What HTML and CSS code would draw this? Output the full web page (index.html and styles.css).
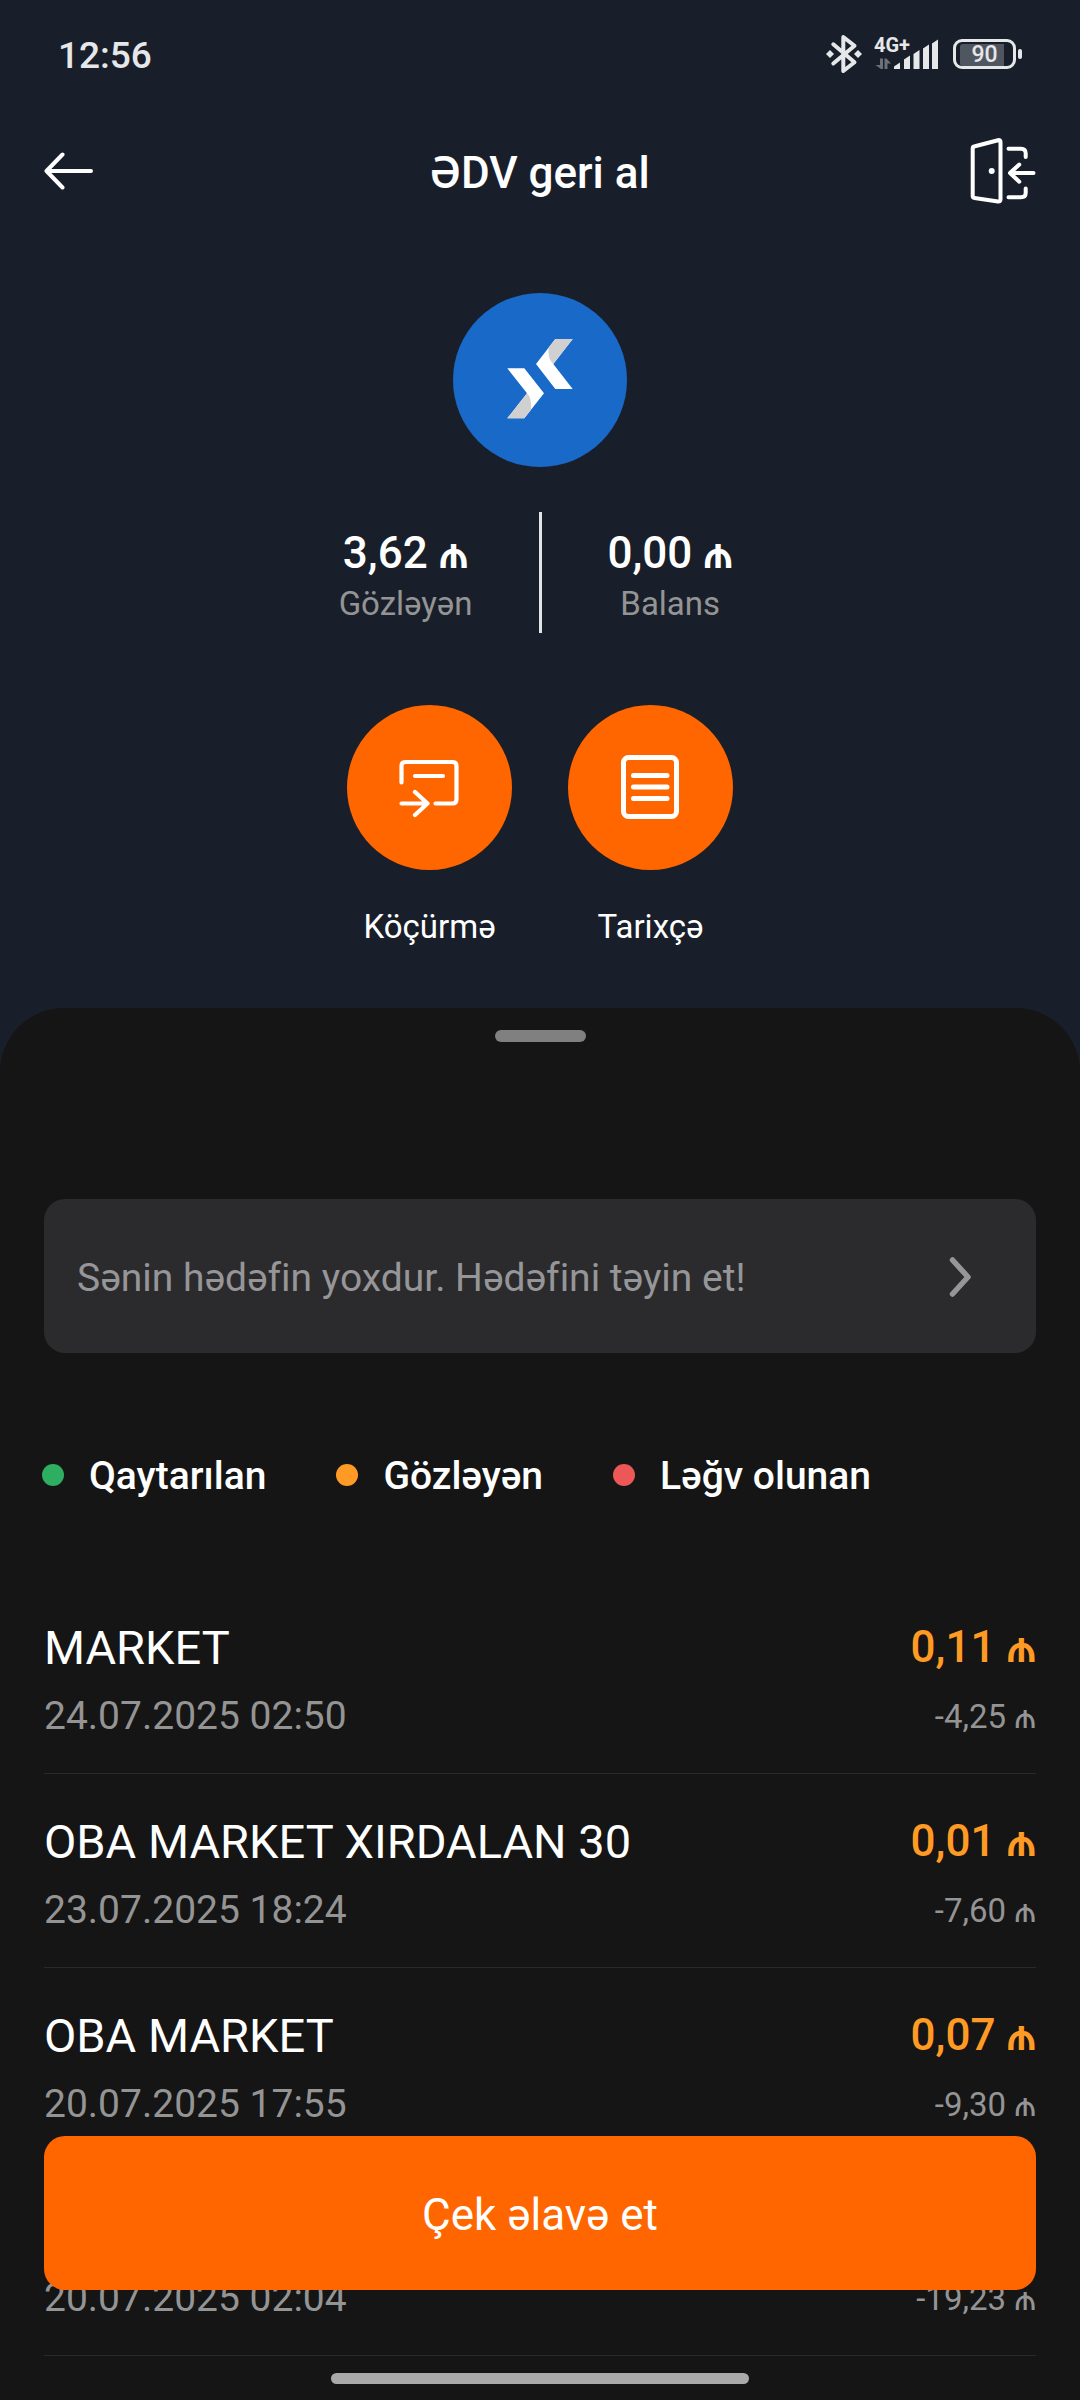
FILE: index.html
```html
<!DOCTYPE html>
<html lang="az">
<head>
<meta charset="utf-8">
<meta name="viewport" content="width=device-width, initial-scale=1">
<title>ƏDV geri al</title>
<link rel="stylesheet" href="styles.css">
</head>
<body>
<div class="status-bar">
  <span class="clock">12:56</span>
  <div class="status-icons">
    <svg class="bluetooth" width="38" height="42" viewBox="0 0 38 42" aria-hidden="true">
      <path d="M8.3 11.3 29.5 29.2 18.3 38V4l11.2 8.8L8.3 30.5" fill="none" stroke="currentColor" stroke-width="4" stroke-linejoin="round" stroke-linecap="round"/>
      <path d="M1 21l4-4 4 4-4 4zM29 21l4-4 4 4-4 4z" fill="currentColor"/>
    </svg>
    <svg class="signal" width="66" height="50" viewBox="0 -8 66 50" aria-hidden="true">
      <text class="network" x="0" y="15">4G+</text>
      <path d="M1.500 28H6V21.500h3V32H7zM10.500 32V21.500h2l4.500 5h-3.500V32z" fill="#6c7078"/>
      <path d="M20 32v-2.500l6-4V32zM30 32V22.500l6-4V32zM39.500 32V17l6-4v19zM49 32V11.500l6-4V32zM58 32V6.500l6-4V32z" fill="currentColor"/>
    </svg>
    <div class="battery"><span class="battery-level">90</span></div>
  </div>
</div>

<header class="top-bar">
  <button class="icon-button" type="button" aria-label="Geri">
    <svg width="50" height="40" viewBox="0 0 50 40"><path d="M47 20H3M18.500 3.500 2.500 20l16 16.500" fill="none" stroke="#fff" stroke-width="4" stroke-linecap="round" stroke-linejoin="round"/></svg>
  </button>
  <h1 class="title">ƏDV geri al</h1>
  <button class="icon-button" type="button" aria-label="Çıxış">
    <svg width="68" height="68" viewBox="0 0 68 68">
      <g fill="none" stroke="#fff" stroke-width="4" stroke-linecap="round" stroke-linejoin="round">
        <path d="M6 9.500 30 3.200q2.500-.6 2.500 1.800v57.500q0 2.300-2.500 2L6.500 61Q4.700 60.700 4.700 59V11.500Q4.700 9.800 6 9.500z"/>
        <path d="M40.500 11.700H53q4.700 0 4.700 4.500V20M57.700 51.500v4.300q0 4.500-4.700 4.500H40.500"/>
        <path d="M65.500 36h-23M51.300 27.500 42 36l9.300 8.700"/>
      </g>
      <circle cx="23.700" cy="34" r="3" fill="#fff"/>
    </svg>
  </button>
</header>

<section class="hero">
  <svg class="logo" width="174" height="174" viewBox="0 0 174 174" aria-hidden="true">
    <circle cx="87" cy="87" r="87" fill="#1969c9"/>
    <path d="M102.300 46h17.400l-19.400 25 19.400 25h-17.400L83 71zM54.300 75.300h17L91 100.300l-19.700 25h-17l19.700-25z" fill="#fff"/>
    <path d="M102.300 46h17.400l-19.400 25Q94 65 96 54zM54.300 125.300h17l6.700-8.500Q79 105 74 100.300z" fill="#d0d0d0"/>
  </svg>
  <dl class="balances">
    <div class="balance pending">
      <dd class="balance-value">3,62 ₼</dd>
      <dt class="balance-label">Gözləyən</dt>
    </div>
    <div class="balance-divider"></div>
    <div class="balance">
      <dd class="balance-value">0,00 ₼</dd>
      <dt class="balance-label">Balans</dt>
    </div>
  </dl>
  <nav class="actions">
    <button class="action" type="button">
      <svg class="action-icon" width="165" height="165" viewBox="0 0 165 165" aria-hidden="true">
        <g fill="none" stroke="#fff" stroke-width="4.200" stroke-linecap="round" stroke-linejoin="round">
          <path d="M54.500 77.500V61q0-4 4-4h47q4 0 4 4v33.500q0 4-4 4H88.500M68 71h28M54.500 98.500h25M68 87l12.500 11.500L68 110"/>
        </g>
      </svg>
      <span>Köçürmə</span>
    </button>
    <button class="action" type="button">
      <svg class="action-icon" width="165" height="165" viewBox="0 0 165 165" aria-hidden="true">
        <g fill="none" stroke="#fff" stroke-width="5" stroke-linecap="round">
          <rect x="55.500" y="52.500" width="53" height="59" rx="5"/>
          <path d="M65.500 70.500h33.500M65.500 82h33.500M65.500 93.500h33.500"/>
        </g>
      </svg>
      <span>Tarixçə</span>
    </button>
  </nav>
</section>

<main class="sheet">
  <div class="handle"></div>
  <a class="goal" href="#goal">
    <span>Sənin hədəfin yoxdur. Hədəfini təyin et!</span>
    <svg width="26" height="42" viewBox="0 0 26 42" aria-hidden="true"><path d="M4.500 3 20 20 4.500 37" fill="none" stroke="currentColor" stroke-width="5.500" stroke-linecap="round" stroke-linejoin="round"/></svg>
  </a>
  <ul class="legend">
    <li class="legend-item returned">Qaytarılan</li>
    <li class="legend-item waiting">Gözləyən</li>
    <li class="legend-item cancelled">Ləğv olunan</li>
  </ul>
  <ul class="receipts">
    <li class="receipt">
      <span class="store">MARKET</span><span class="refund">0,11 ₼</span>
      <time class="date">24.07.2025 02:50</time><span class="spent">-4,25 ₼</span>
    </li>
    <li class="receipt">
      <span class="store">OBA MARKET XIRDALAN 30</span><span class="refund">0,01 ₼</span>
      <time class="date">23.07.2025 18:24</time><span class="spent">-7,60 ₼</span>
    </li>
    <li class="receipt">
      <span class="store">OBA MARKET</span><span class="refund">0,07 ₼</span>
      <time class="date">20.07.2025 17:55</time><span class="spent">-9,30 ₼</span>
    </li>
    <li class="receipt">
      <time class="date">20.07.2025 02:04</time><span class="spent">-19,23 ₼</span>
    </li>
  </ul>
</main>

<footer class="bottom-bar">
  <button class="add-receipt" type="button">Çek əlavə et</button>
  <div class="home-indicator"></div>
</footer>
</body>
</html>
```

FILE: styles.css
```css
* {
  box-sizing: border-box;
}

body {
  margin: 0;
  min-height: 100vh;
  display: flex;
  flex-direction: column;
  background: #191f2a;
  color: #fff;
  font-family: Roboto, "Noto Sans", sans-serif;
}

button {
  padding: 0;
  border: 0;
  background: none;
  color: inherit;
  font: inherit;
}

ul,
dl,
dd {
  margin: 0;
  padding: 0;
  list-style: none;
}

svg {
  display: block;
}

/* Status bar */
.status-bar {
  display: flex;
  align-items: center;
  justify-content: space-between;
  height: 108px;
  padding: 0 58px;
  color: #e6e7e9;
}

.clock {
  padding-top: 2px;
  font-size: 37px;
  font-weight: 500;
}

.status-icons {
  display: flex;
  align-items: center;
  gap: 11px;
}

.network {
  fill: currentColor;
  font-size: 20px;
  font-weight: 700;
}

.battery {
  position: relative;
  width: 63px;
  height: 30px;
  margin: 0 6px 0 2px;
  padding: 2px 4px;
  border: 3px solid currentColor;
  border-radius: 9px;
}

.battery::after {
  content: "";
  position: absolute;
  top: 7px;
  right: -9px;
  width: 4px;
  height: 10px;
  border-radius: 2px;
  background: currentColor;
}

.battery-level {
  display: block;
  border-radius: 3px;
  background: linear-gradient(90deg, #50565f 90%, transparent 90%);
  font-size: 23px;
  font-weight: 500;
  line-height: 22px;
  text-align: center;
}

/* Header */
.top-bar {
  display: grid;
  grid-template-columns: 1fr auto 1fr;
  align-items: center;
  height: 126px;
  padding: 0 44px;
}

.icon-button:first-child {
  justify-self: start;
}

.icon-button:last-child {
  justify-self: end;
}

.title {
  margin: 0;
  padding-top: 3px;
  font-size: 44px;
  font-weight: 500;
}

/* Balances and actions */
.hero {
  display: flex;
  flex-direction: column;
  align-items: center;
  padding: 59px 44px 59px;
}

.balances {
  display: grid;
  grid-template-columns: 1fr 3px 1fr;
  align-items: center;
  gap: 66px;
  width: 100%;
  margin: 45px 0 72px;
}

.balance {
  justify-self: start;
  display: flex;
  flex-direction: column;
  align-items: center;
}

.pending {
  justify-self: end;
}

.balance-divider {
  height: 121px;
  background: #e3e4e6;
}

.balance-value {
  font-size: 44px;
  font-weight: 500;
  line-height: 62px;
}

.balance-label {
  color: #949494;
  font-size: 33px;
  line-height: 40px;
}

.actions {
  display: flex;
  gap: 56px;
}

.action {
  display: flex;
  flex-direction: column;
  align-items: center;
  gap: 35px;
  font-size: 33px;
  line-height: 44px;
}

.action-icon {
  border-radius: 50%;
  background: #ff6600;
}

/* Bottom sheet */
.sheet {
  flex: 1;
  padding: 22px 44px 0;
  border-radius: 64px 64px 0 0;
  background: #151515;
}

.handle {
  width: 91px;
  height: 12px;
  margin: 0 auto 157px;
  border-radius: 6px;
  background: #808080;
}

.goal {
  display: flex;
  align-items: center;
  justify-content: space-between;
  height: 154px;
  padding: 3px 62px 0 33px;
  border-radius: 21px;
  background: #2b2b2d;
  color: #969698;
  font-size: 39px;
  text-decoration: none;
}

.legend {
  display: flex;
  gap: 70px;
  margin: 99px 0 80px -2px;
}

.legend-item {
  display: flex;
  align-items: center;
  gap: 25px;
  font-size: 39px;
  font-weight: 500;
  line-height: 48px;
}

.legend-item::before {
  content: "";
  width: 22px;
  height: 22px;
  margin-bottom: 2px;
  border-radius: 50%;
  background: currentColor;
}

.returned::before {
  background: #2dae60;
}

.waiting::before {
  background: #ff9a24;
}

.cancelled::before {
  background: #ec5757;
}

.receipt {
  display: grid;
  grid-template-columns: 1fr auto;
  grid-template-rows: 60px 48px;
  align-items: center;
  row-gap: 15px;
  padding: 37px 0 33px;
  border-bottom: 1px solid #2a2a2a;
}

.store {
  font-size: 47px;
}

.refund {
  justify-self: end;
  color: #ff9a24;
  font-size: 44px;
  font-weight: 500;
}

.date,
.spent {
  grid-row: 2;
  color: #949494;
}

.date {
  font-size: 39px;
}

.spent {
  justify-self: end;
  font-size: 33px;
}

/* Pinned footer */
.bottom-bar {
  position: fixed;
  right: 0;
  bottom: 0;
  left: 0;
  padding: 0 44px 16px;
}

.add-receipt {
  display: block;
  width: 100%;
  height: 154px;
  margin-bottom: 83px;
  padding-top: 3px;
  border-radius: 21px;
  background: #ff6600;
  font-size: 44px;
}

.home-indicator {
  width: 418px;
  height: 11px;
  margin: 0 auto;
  border-radius: 6px;
  background: #a9a9a9;
}
```
